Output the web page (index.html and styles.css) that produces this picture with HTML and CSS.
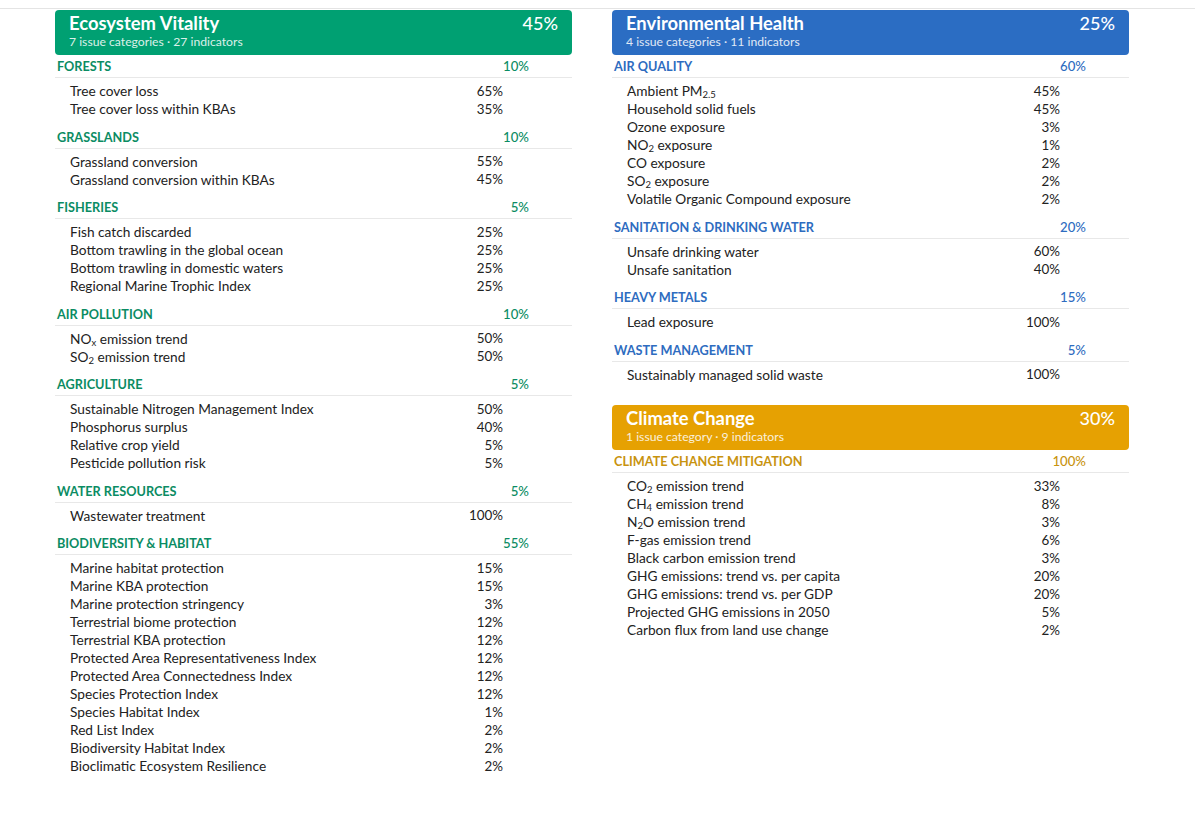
FILE: index.html
```html
<!DOCTYPE html>
<html lang="en">
<head>
<meta charset="utf-8">
<title>EPI weights</title>
<link rel="stylesheet" href="styles.css">
</head>
<body>
<div class="topline"></div>
<div class="columns">
  <div class="column">
    <section class="block eco">
      <div class="head">
        <div class="head-text">
          <div class="title">Ecosystem Vitality</div>
          <div class="sub">7 issue categories · 27 indicators</div>
        </div>
        <div class="head-pct">45%</div>
      </div>
      <div class="cat"><span>FORESTS</span><span class="cpct">10%</span></div>
      <div class="items">
        <div class="row"><span>Tree cover loss</span><span class="pct">65%</span></div>
        <div class="row"><span>Tree cover loss within KBAs</span><span class="pct">35%</span></div>
      </div>
      <div class="cat"><span>GRASSLANDS</span><span class="cpct">10%</span></div>
      <div class="items">
        <div class="row"><span>Grassland conversion</span><span class="pct">55%</span></div>
        <div class="row"><span>Grassland conversion within KBAs</span><span class="pct">45%</span></div>
      </div>
      <div class="cat"><span>FISHERIES</span><span class="cpct">5%</span></div>
      <div class="items">
        <div class="row"><span>Fish catch discarded</span><span class="pct">25%</span></div>
        <div class="row"><span>Bottom trawling in the global ocean</span><span class="pct">25%</span></div>
        <div class="row"><span>Bottom trawling in domestic waters</span><span class="pct">25%</span></div>
        <div class="row"><span>Regional Marine Trophic Index</span><span class="pct">25%</span></div>
      </div>
      <div class="cat"><span>AIR POLLUTION</span><span class="cpct">10%</span></div>
      <div class="items">
        <div class="row"><span>NO<sub>x</sub> emission trend</span><span class="pct">50%</span></div>
        <div class="row"><span>SO<sub>2</sub> emission trend</span><span class="pct">50%</span></div>
      </div>
      <div class="cat"><span>AGRICULTURE</span><span class="cpct">5%</span></div>
      <div class="items">
        <div class="row"><span>Sustainable Nitrogen Management Index</span><span class="pct">50%</span></div>
        <div class="row"><span>Phosphorus surplus</span><span class="pct">40%</span></div>
        <div class="row"><span>Relative crop yield</span><span class="pct">5%</span></div>
        <div class="row"><span>Pesticide pollution risk</span><span class="pct">5%</span></div>
      </div>
      <div class="cat"><span>WATER RESOURCES</span><span class="cpct">5%</span></div>
      <div class="items">
        <div class="row"><span>Wastewater treatment</span><span class="pct">100%</span></div>
      </div>
      <div class="cat"><span>BIODIVERSITY &amp; HABITAT</span><span class="cpct">55%</span></div>
      <div class="items">
        <div class="row"><span>Marine habitat protection</span><span class="pct">15%</span></div>
        <div class="row"><span>Marine KBA protection</span><span class="pct">15%</span></div>
        <div class="row"><span>Marine protection stringency</span><span class="pct">3%</span></div>
        <div class="row"><span>Terrestrial biome protection</span><span class="pct">12%</span></div>
        <div class="row"><span>Terrestrial KBA protection</span><span class="pct">12%</span></div>
        <div class="row"><span>Protected Area Representativeness Index</span><span class="pct">12%</span></div>
        <div class="row"><span>Protected Area Connectedness Index</span><span class="pct">12%</span></div>
        <div class="row"><span>Species Protection Index</span><span class="pct">12%</span></div>
        <div class="row"><span>Species Habitat Index</span><span class="pct">1%</span></div>
        <div class="row"><span>Red List Index</span><span class="pct">2%</span></div>
        <div class="row"><span>Biodiversity Habitat Index</span><span class="pct">2%</span></div>
        <div class="row"><span>Bioclimatic Ecosystem Resilience</span><span class="pct">2%</span></div>
      </div>
    </section>
  </div>
  <div class="column">
    <section class="block env">
      <div class="head">
        <div class="head-text">
          <div class="title">Environmental Health</div>
          <div class="sub">4 issue categories · 11 indicators</div>
        </div>
        <div class="head-pct">25%</div>
      </div>
      <div class="cat"><span>AIR QUALITY</span><span class="cpct">60%</span></div>
      <div class="items">
        <div class="row"><span>Ambient PM<sub>2.5</sub></span><span class="pct">45%</span></div>
        <div class="row"><span>Household solid fuels</span><span class="pct">45%</span></div>
        <div class="row"><span>Ozone exposure</span><span class="pct">3%</span></div>
        <div class="row"><span>NO<sub>2</sub> exposure</span><span class="pct">1%</span></div>
        <div class="row"><span>CO exposure</span><span class="pct">2%</span></div>
        <div class="row"><span>SO<sub>2</sub> exposure</span><span class="pct">2%</span></div>
        <div class="row"><span>Volatile Organic Compound exposure</span><span class="pct">2%</span></div>
      </div>
      <div class="cat"><span>SANITATION &amp; DRINKING WATER</span><span class="cpct">20%</span></div>
      <div class="items">
        <div class="row"><span>Unsafe drinking water</span><span class="pct">60%</span></div>
        <div class="row"><span>Unsafe sanitation</span><span class="pct">40%</span></div>
      </div>
      <div class="cat"><span>HEAVY METALS</span><span class="cpct">15%</span></div>
      <div class="items">
        <div class="row"><span>Lead exposure</span><span class="pct">100%</span></div>
      </div>
      <div class="cat"><span>WASTE MANAGEMENT</span><span class="cpct">5%</span></div>
      <div class="items">
        <div class="row"><span>Sustainably managed solid waste</span><span class="pct">100%</span></div>
      </div>
    </section>
    <section class="block cli">
      <div class="head">
        <div class="head-text">
          <div class="title">Climate Change</div>
          <div class="sub">1 issue category · 9 indicators</div>
        </div>
        <div class="head-pct">30%</div>
      </div>
      <div class="cat"><span>CLIMATE CHANGE MITIGATION</span><span class="cpct">100%</span></div>
      <div class="items">
        <div class="row"><span>CO<sub>2</sub> emission trend</span><span class="pct">33%</span></div>
        <div class="row"><span>CH<sub>4</sub> emission trend</span><span class="pct">8%</span></div>
        <div class="row"><span>N<sub>2</sub>O emission trend</span><span class="pct">3%</span></div>
        <div class="row"><span>F-gas emission trend</span><span class="pct">6%</span></div>
        <div class="row"><span>Black carbon emission trend</span><span class="pct">3%</span></div>
        <div class="row"><span>GHG emissions: trend vs. per capita</span><span class="pct">20%</span></div>
        <div class="row"><span>GHG emissions: trend vs. per GDP</span><span class="pct">20%</span></div>
        <div class="row"><span>Projected GHG emissions in 2050</span><span class="pct">5%</span></div>
        <div class="row"><span>Carbon flux from land use change</span><span class="pct">2%</span></div>
      </div>
    </section>
  </div>
</div>
</body>
</html>
```

FILE: styles.css
```css
html, body {
  margin: 0;
  padding: 0;
  background: #ffffff;
}
body {
  font-family: Lato, "Noto Sans", "Liberation Sans", sans-serif;
  color: #222222;
  padding-top: 8px;
}
.topline {
  height: 1px;
  background: #e4e4e4;
}
.columns {
  display: flex;
  gap: 40px;
  padding-left: 55px;
  margin-top: 1px;
}
.column {
  width: 517px;
  display: flex;
  flex-direction: column;
  gap: 14px;
}
.head {
  height: 45px;
  box-sizing: border-box;
  border-radius: 4px;
  padding: 3px 14px 0 14px;
  display: flex;
  justify-content: space-between;
  align-items: flex-start;
  color: #ffffff;
}
.title {
  font-size: 18.4px;
  line-height: 21px;
  font-weight: 700;
}
.sub {
  font-size: 12.2px;
  line-height: 15px;
  opacity: 0.85;
}
.head-pct {
  font-size: 18px;
  line-height: 21px;
  font-weight: 500;
}
.cat {
  height: 22px;
  display: flex;
  justify-content: space-between;
  align-items: center;
  padding: 0 43px 0 2px;
  font-size: 12.7px;
  font-weight: 700;
  border-bottom: 1px solid #e8e8e8;
}
.cpct {
  font-weight: 500;
  font-size: 13.2px;
}
.items {
  padding: 3.5px 0 8px 0;
}
.row {
  height: 18px;
  display: flex;
  justify-content: space-between;
  align-items: center;
  padding: 0 69px 0 15px;
  font-size: 13.7px;
}
.row .pct {
  font-size: 13.4px;
}
.row sub {
  font-size: 9.5px;
  line-height: 0;
  vertical-align: -2px;
}
.eco .head { background: #00a072; }
.eco .cat { color: #0b8c63; }
.env .head { background: #2b6dc3; }
.env .cat { color: #2e6cc0; }
.cli .head { background: #e6a102; }
.cli .cat { color: #c8930f; }
```
